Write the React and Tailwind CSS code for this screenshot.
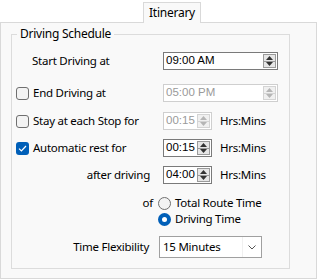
import React from "react";

const ui = { fontFamily: '"Noto Sans", "Open Sans", sans-serif', letterSpacing: "-0.25px" };
const ms = { fontFamily: '"Liberation Sans", Arial, sans-serif', letterSpacing: "0px" };

function Spin({ disabled }) {
  const c = disabled ? "#b5b5b5" : "#333";
  return (
    <div className={`flex flex-col w-[13px] h-[14px] border ${disabled ? "border-[#d4d4d4] bg-[#f0f0f0]" : "border-[#9a9a9a] bg-[#e6e6e6]"}`}>
      <div className="flex-1 flex items-center justify-center">
        <svg width="7" height="4" viewBox="0 0 7 4"><path d="M0 4 L3.5 0 L7 4 Z" fill={c} /></svg>
      </div>
      <div className={`h-px ${disabled ? "bg-[#d4d4d4]" : "bg-[#9a9a9a]"}`} />
      <div className="flex-1 flex items-center justify-center">
        <svg width="7" height="4" viewBox="0 0 7 4"><path d="M0 0 L7 0 L3.5 4 Z" fill={c} /></svg>
      </div>
    </div>
  );
}

function TimeBox({ value, disabled, w }) {
  return (
    <div
      className={`flex items-center justify-between h-[18px] border bg-white pl-[2px] pr-[1px] shrink-0 ${disabled ? "border-[#cfcfcf] text-[#9a9a9a]" : "border-[#7a7a7a] text-black"} ${w}`}
    >
      <span className="text-[11.5px] leading-none" style={ms}>{value}</span>
      <Spin disabled={disabled} />
    </div>
  );
}

function Check({ checked }) {
  if (checked)
    return (
      <div className="w-[13px] h-[13px] rounded-[3px] bg-[#005fb8] flex items-center justify-center shrink-0">
        <svg width="9" height="7" viewBox="0 0 9 7"><path d="M1 3.6 L3.4 6 L8 1" stroke="white" strokeWidth="1.2" fill="none" /></svg>
      </div>
    );
  return <div className="w-[13px] h-[13px] rounded-[3px] border border-[#6f6f6f] bg-[#f3f3f3] shrink-0" />;
}

function Radio({ checked }) {
  if (checked)
    return (
      <div className="w-[13px] h-[13px] rounded-full bg-[#005fb8] flex items-center justify-center shrink-0">
        <div className="w-[5px] h-[5px] rounded-full bg-white" />
      </div>
    );
  return <div className="w-[13px] h-[13px] rounded-full border border-[#6f6f6f] bg-[#f3f3f3] shrink-0" />;
}

function Row({ className, label, children }) {
  return (
    <div className={`flex items-center ${className}`}>
      <div className="w-[151px] shrink-0 flex items-center">{label}</div>
      {children}
    </div>
  );
}

export default function App() {
  return (
    <div className="w-[317px] h-[280px] bg-white text-[11.5px] text-black flex flex-col" style={ui}>
      <div className="h-[22px] flex items-end pl-[143px]">
        <div className="w-[58px] h-[21px] border border-b-0 border-[#d9d9d9] bg-[#f9f9f9] flex items-center justify-center -mb-px relative text-[12px]">
          Itinerary
        </div>
      </div>
      <div className="w-[317px] h-[257px] border border-[#d9d9d9] bg-[#f9f9f9] pl-[10px] pt-[3px]">
        <fieldset className="w-[279px] h-[243px] border border-[#dcdcdc] px-0 pt-0">
          <legend className="ml-[5px] px-[3px] leading-[16px] text-[12px]">Driving Schedule</legend>
          <div className="flex flex-col">
            <Row className="h-[18px] mt-[10px]" label={<span className="ml-[20px]">Start Driving at</span>}>
              <TimeBox value="09:00 AM" w="w-[115px]" />
            </Row>
            <Row
              className="h-[18px] mt-[14px]"
              label={<><div className="ml-[4px]"><Check /></div><span className="ml-[4px]">End Driving at</span></>}
            >
              <TimeBox value="05:00 PM" disabled w="w-[115px]" />
            </Row>
            <Row
              className="h-[18px] mt-[10px]"
              label={<><div className="ml-[4px]"><Check /></div><span className="ml-[4px]">Stay at each Stop for</span></>}
            >
              <TimeBox value="00:15" disabled w="w-[49px]" />
              <span className="ml-[8px]">Hrs:Mins</span>
            </Row>
            <Row
              className="h-[18px] mt-[9px]"
              label={<><div className="ml-[4px]"><Check checked /></div><span className="ml-[4px]">Automatic rest for</span></>}
            >
              <TimeBox value="00:15" w="w-[49px]" />
              <span className="ml-[8px]">Hrs:Mins</span>
            </Row>
            <Row className="h-[18px] mt-[9px]" label={<span className="ml-auto mr-[13px]">after driving</span>}>
              <TimeBox value="04:00" w="w-[49px]" />
              <span className="ml-[8px]">Hrs:Mins</span>
            </Row>
            <div className="flex items-center h-[16px] mt-[11px]">
              <div className="w-[146px] shrink-0 flex"><span className="ml-auto mr-[5px]">of</span></div>
              <Radio />
              <span className="ml-[4px]">Total Route Time</span>
            </div>
            <div className="flex items-center h-[16px]">
              <div className="w-[146px] shrink-0" />
              <Radio checked />
              <span className="ml-[4px]">Driving Time</span>
            </div>
            <div className="flex items-center h-[22px] mt-[9px]">
              <div className="w-[147px] shrink-0 flex"><span className="ml-auto mr-[10px]">Time Flexibility</span></div>
              <div className="w-[103px] h-[22px] border border-[#a0a0a0] bg-white flex items-center shrink-0">
                <span className="flex-1 pl-[3px]">15 Minutes</span>
                <div className="w-[19px] h-full flex items-center justify-center border-l border-[#f0f0f0]">
                  <svg width="8" height="5" viewBox="0 0 8 5"><path d="M0.5 0.5 L4 4 L7.5 0.5" stroke="#555" strokeWidth="1" fill="none" /></svg>
                </div>
              </div>
            </div>
          </div>
        </fieldset>
      </div>
    </div>
  );
}
